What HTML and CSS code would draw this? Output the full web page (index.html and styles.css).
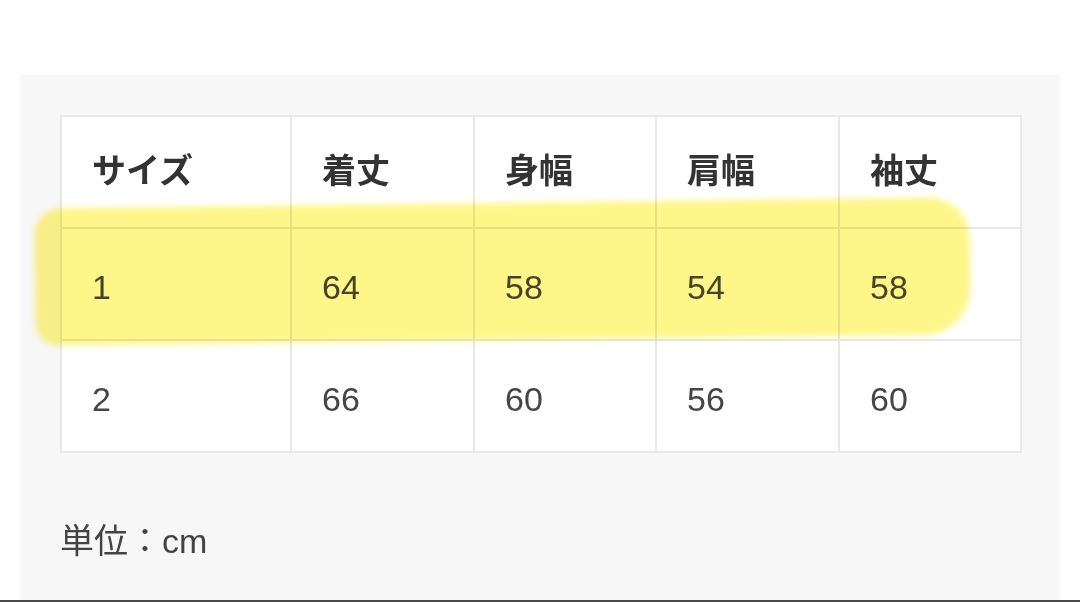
FILE: index.html
```html
<!DOCTYPE html>
<html lang="ja">
<head>
<meta charset="utf-8">
<link rel="stylesheet" href="styles.css">
</head>
<body>
<div class="panel">
  <table class="size-table">
    <colgroup>
      <col class="c1"><col class="c2"><col class="c3"><col class="c4"><col class="c5">
    </colgroup>
    <thead>
      <tr><th>サイズ</th><th>着丈</th><th>身幅</th><th>肩幅</th><th>袖丈</th></tr>
    </thead>
    <tbody>
      <tr><td>1</td><td>64</td><td>58</td><td>54</td><td>58</td></tr>
      <tr><td>2</td><td>66</td><td>60</td><td>56</td><td>60</td></tr>
    </tbody>
  </table>
  <p class="unit">単位：cm</p>
  <div class="highlight"></div>
</div>
<div class="bottom-line"></div>
</body>
</html>
```
FILE: styles.css
```css
html, body {
  margin: 0;
  padding: 0;
  background: #ffffff;
  width: 1080px;
  height: 602px;
  overflow: hidden;
}
body {
  display: flex;
  flex-direction: column;
  font-family: "Liberation Sans", "Noto Sans CJK JP", sans-serif;
}
.panel {
  position: relative;
  margin: 75px 20px 0 20px;
  height: 525px;
  background: #f7f7f7;
  padding: 40px 40px 0 40px;
  box-sizing: border-box;
}
.size-table {
  border-collapse: collapse;
  table-layout: fixed;
  width: 960px;
  background: #ffffff;
  border: 2px solid #e8e8e8;
}
.c1 { width: 230px; }
.c2 { width: 183px; }
.c3 { width: 182px; }
.c4 { width: 183px; }
.c5 { width: 182px; }
.size-table th,
.size-table td {
  border: 2px solid #e8e8e8;
  height: 112px;
  padding: 0 0 0 30px;
  text-align: left;
  vertical-align: middle;
  box-sizing: border-box;
}
.size-table th {
  font-family: "Noto Sans CJK JP", sans-serif;
  font-weight: 700;
  font-size: 34px;
  color: #333333;
  padding-bottom: 7px;
}
.size-table td {
  font-size: 34px;
  color: #464646;
  padding-top: 6px;
}
.unit {
  margin: 61px 0 0 0;
  font-family: "Liberation Sans", "Noto Sans CJK JP", sans-serif;
  font-size: 34px;
  color: #444444;
}
.highlight {
  position: absolute;
  left: 15px;
  top: 128px;
  width: 935px;
  height: 137px;
  background: #fff68a;
  border-radius: 26px 40px 46px 22px;
  transform: rotate(-0.7deg);
  filter: blur(3px);
  mix-blend-mode: multiply;
  pointer-events: none;
}
.bottom-line {
  height: 2px;
  background: #4a4a4a;
}
```
